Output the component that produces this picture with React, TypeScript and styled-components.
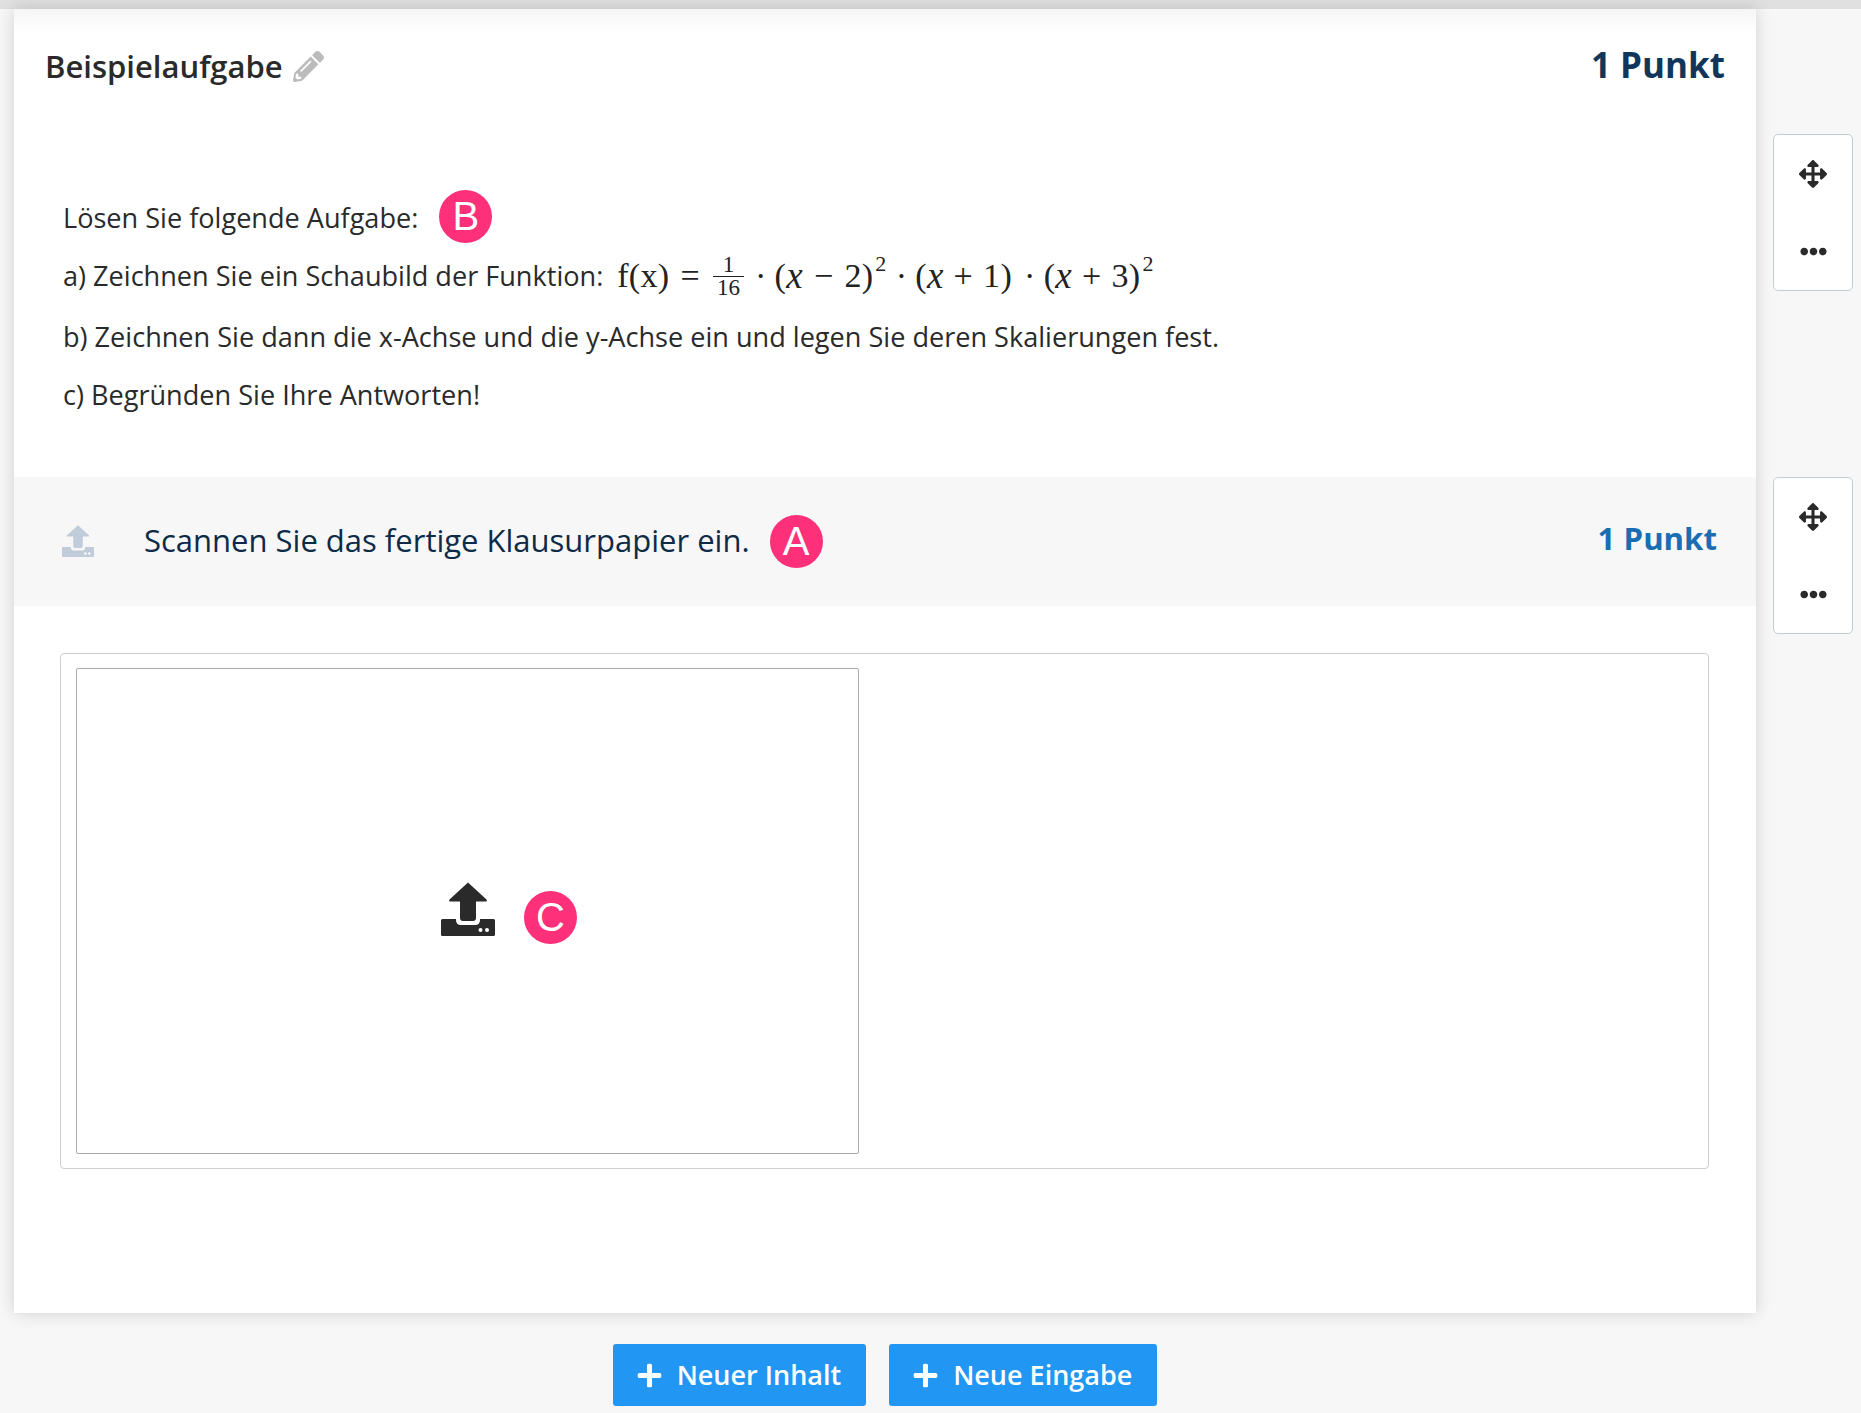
import React from "react";
import styled, { createGlobalStyle } from "styled-components";
import { FaArrowsAlt, FaEllipsisH, FaPencilAlt, FaPlus } from "react-icons/fa";

const Global = createGlobalStyle`
  html, body { margin: 0; padding: 0; background: #f7f7f7; }
  body { font-family: "Open Sans", "Liberation Sans", sans-serif; color: #2a2a2a; height: 1413px; overflow: hidden; }
`;

const Page = styled.div`
  position: relative;
  height: 1413px;
  overflow: hidden;
  padding: 9px 0 0 14px;
  box-sizing: border-box;
  background: linear-gradient(#e0e0e0, #e0e0e0) top left / 100% 9px no-repeat, #f7f7f7;
`;
const Row = styled.div`
  display: flex;
  align-items: flex-start;
`;
const Column = styled.div`
  width: 1742px;
  display: flex;
  flex-direction: column;
`;
const Card = styled.main`
  height: 1304px;
  background: linear-gradient(#f6f6f6, #ffffff 26px);
  box-shadow: 0 0 16px rgba(0, 0, 0, 0.16);
  display: flex;
  flex-direction: column;
`;
const Header = styled.header`
  display: flex;
  justify-content: space-between;
  align-items: center;
  height: 114px;
  padding: 0 31px;
`;
const Title = styled.h1`
  margin: 0;
  font-size: 31px;
  font-weight: 600;
  line-height: 40px;
  color: #2a2a2a;
  display: flex;
  align-items: center;
  gap: 10px;
  padding-bottom: 1px;
`;
const PencilIcon = styled(FaPencilAlt)`
  width: 31px;
  height: 31px;
  color: #bbbbbb;
  margin-top: 1px;
`;
const Points = styled.div`
  font-size: 35px;
  font-weight: 700;
  color: #12365a;
  padding-bottom: 4px;
`;
const Question = styled.section`
  height: 354px;
  box-sizing: border-box;
  padding: 65.5px 0 0 49px;
  font-size: 27.1px;
  color: #2a2a2a;
`;
const QLine = styled.div`
  height: 58px;
  display: flex;
  align-items: center;
  white-space: pre;
`;
const MathLine = styled(QLine)`
  margin-bottom: 3px;
`;
const Badge = styled.span<{ $size: number; $font: number }>`
  width: ${p => p.$size}px;
  height: ${p => p.$size}px;
  border-radius: 50%;
  background: #fd3079;
  color: #ffffff;
  font-family: "Liberation Sans", Arial, sans-serif;
  font-size: ${p => p.$font}px;
  display: inline-flex;
  align-items: center;
  justify-content: center;
  flex: none;
`;
const LineBadge = styled(Badge)`
  margin: -3px 0 0 7px;
`;
const HeadBadge = styled(Badge)`
  margin-top: 3px;
  margin-left: -1px;
`;
const Math = styled.span`
  font-family: "Liberation Serif", serif;
  font-size: 34px;
  letter-spacing: 0.3px;
  display: inline-flex;
  align-items: center;
  margin-left: 14px;
  color: #222;
  white-space: pre;
`;
const MathVar = styled.i`
  font-style: italic;
  font-size: 37px;
  line-height: 1;
`;
const Op = styled.span<{ $gap: number }>`
  margin: 0 ${p => p.$gap}px;
`;
const Dot = styled.span<{ $left: number }>`
  margin: 0 8px 0 ${p => p.$left}px;
`;
const Frac = styled.span`
  display: inline-flex;
  flex-direction: column;
  align-items: center;
  font-size: 23px;
  line-height: 22px;
  letter-spacing: 0;
  padding-top: 2px;
  margin-left: 2px;
`;
const Num = styled.span`
  border-bottom: 1px solid #222;
  padding: 0 3px;
  text-align: center;
  align-self: stretch;
`;
const Den = styled.span`
  padding: 0 4px;
`;
const Sup = styled.span`
  font-size: 22px;
  line-height: 1;
  align-self: flex-start;
  margin-left: 2px;
  margin-top: 1px;
`;
const SectionHead = styled.section`
  height: 129px;
  box-sizing: border-box;
  background: #f7f7f7;
  display: flex;
  align-items: center;
  padding: 0 39px 3px 48px;
`;
const SmallIcon = styled.div`
  display: flex;
  margin-top: 2px;
`;
const SectionTitle = styled.div`
  font-size: 31px;
  color: #0d2a47;
  margin-left: 50px;
  margin-right: 21px;
`;
const SectionPoints = styled.div`
  margin-left: auto;
  font-size: 31.2px;
  font-weight: 700;
  color: #1a6db3;
  padding-bottom: 4px;
`;
const Answer = styled.section`
  margin: 47px 47px 0 46px;
  height: 516px;
  box-sizing: border-box;
  border: 1px solid #cfcfcf;
  border-radius: 4px;
  padding: 14px 15px;
`;
const Drop = styled.div`
  width: 783px;
  height: 486px;
  box-sizing: border-box;
  border: 1px solid #a9a9a9;
  border-radius: 2px;
  position: relative;
  display: flex;
  align-items: center;
  justify-content: center;
`;
const DropIcon = styled.div`
  display: flex;
  margin-top: -4px;
`;
const DropBadge = styled(Badge)`
  position: absolute;
  left: 447px;
  top: 222px;
`;
const Buttons = styled.div`
  display: flex;
  justify-content: center;
  gap: 23px;
  margin-top: 31px;
`;
const Btn = styled.button`
  height: 62px;
  padding: 0 25px 2px 23px;
  border: 0;
  border-radius: 3px;
  background: #2196f3;
  color: #fff;
  font-family: "Open Sans", sans-serif;
  font-size: 27px;
  font-weight: 600;
  display: flex;
  align-items: center;
  gap: 14px;
`;
const PlusIcon = styled(FaPlus)`
  width: 27px;
  height: 27px;
  margin-top: 2px;
`;
const Side = styled.aside`
  margin-left: 17px;
  margin-top: 125px;
  display: flex;
  flex-direction: column;
  gap: 186px;
`;
const Tools = styled.div`
  width: 80px;
  height: 157px;
  box-sizing: border-box;
  background: #fff;
  border: 1px solid #c2ccd8;
  border-radius: 5px;
  display: flex;
  flex-direction: column;
  align-items: center;
  justify-content: space-between;
  padding: 25px 0 25px;
  color: #2a2a2a;
`;
const MoveIcon = styled(FaArrowsAlt)`
  width: 28px;
  height: 28px;
`;
const DotsIcon = styled(FaEllipsisH)`
  width: 27px;
  height: 27px;
`;
const UploadSvg = styled.svg<{ $w: number; $c: string }>`
  width: ${p => p.$w}px;
  height: ${p => p.$w}px;
  color: ${p => p.$c};
  flex: none;
`;

const Upload = ({ w, c }: { w: number; c: string }) => (
  <UploadSvg $w={w} $c={c} viewBox="0 0 54 54" fill="currentColor">
    <path d="M27 .5 45.5 17.5q1 2-1 2H35V36q0 3-3 3H22q-3 0-3-3V19.5H9.5q-2 0-1-2Z" />
    <path d="M1.5 37H15v1q0 5 5 5H34q5 0 5-5v-1h13.5Q54 37 54 38.5v14Q54 54 52.5 54H1.5Q0 54 0 52.5v-14Q0 37 1.5 37Z" />
    <circle cx="39.5" cy="48" r="2" fill="#fff" />
    <circle cx="46" cy="48" r="2" fill="#fff" />
  </UploadSvg>
);

export default function App() {
  return (
    <Page>
      <Global />
      <Row>
        <Column>
          <Card>
            <Header>
              <Title>
                Beispielaufgabe <PencilIcon />
              </Title>
              <Points>1 Punkt</Points>
            </Header>
            <Question>
              <QLine>
                Lösen Sie folgende Aufgabe:{"  "}
                <LineBadge $size={53} $font={40}>B</LineBadge>
              </QLine>
              <MathLine>
                a) Zeichnen Sie ein Schaubild der Funktion:
                <Math>
                  f(x)<Op $gap={11}>=</Op><Frac><Num>1</Num><Den>16</Den></Frac><Dot $left={11}>·</Dot>(<MathVar>x</MathVar><Op $gap={11}>−</Op>2)<Sup>2</Sup><Dot $left={9}>·</Dot>(<MathVar>x</MathVar><Op $gap={10}>+</Op>1)<Dot $left={12}>·</Dot>(<MathVar>x</MathVar><Op $gap={10}>+</Op>3)<Sup>2</Sup>
                </Math>
              </MathLine>
              <QLine>b) Zeichnen Sie dann die x-Achse und die y-Achse ein und legen Sie deren Skalierungen fest.</QLine>
              <QLine>c) Begründen Sie Ihre Antworten!</QLine>
            </Question>
            <SectionHead>
              <SmallIcon><Upload w={32} c="#c0ccd9" /></SmallIcon>
              <SectionTitle>Scannen Sie das fertige Klausurpapier ein.</SectionTitle>
              <HeadBadge $size={53} $font={40}>A</HeadBadge>
              <SectionPoints>1 Punkt</SectionPoints>
            </SectionHead>
            <Answer>
              <Drop>
                <DropIcon><Upload w={54} c="#2a2a2a" /></DropIcon>
                <DropBadge $size={53} $font={40}>C</DropBadge>
              </Drop>
            </Answer>
          </Card>
          <Buttons>
            <Btn><PlusIcon />Neuer Inhalt</Btn>
            <Btn><PlusIcon />Neue Eingabe</Btn>
          </Buttons>
        </Column>
        <Side>
          <Tools><MoveIcon /><DotsIcon /></Tools>
          <Tools><MoveIcon /><DotsIcon /></Tools>
        </Side>
      </Row>
    </Page>
  );
}
